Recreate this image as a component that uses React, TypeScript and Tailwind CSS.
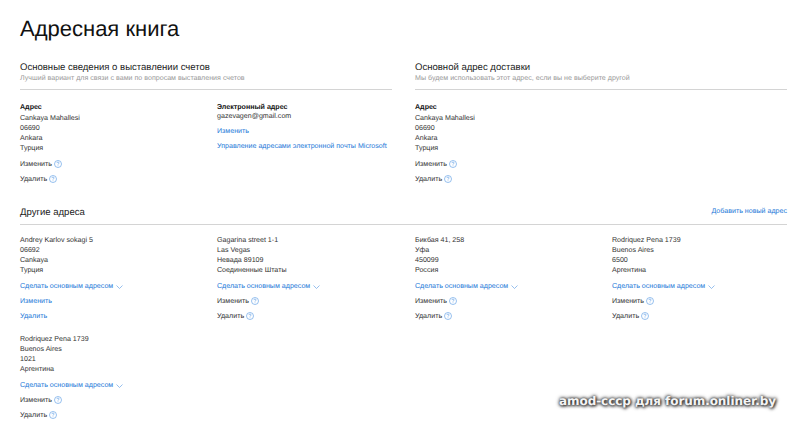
import React from "react";

const Help = () => (
  <svg width="8" height="8" viewBox="0 0 8 8" fill="none" className="ml-[2px] inline-block relative -top-[1px]">
    <circle cx="4" cy="4" r="3.5" stroke="#6aa5e6" strokeWidth="0.7" />
    <path d="M2.9 3.1C2.9 2.4 3.4 2 4 2s1.1.4 1.1 1c0 .8-1.1.8-1.1 1.6M4 5.5v.6" stroke="#6aa5e6" strokeWidth="0.7" />
  </svg>
);

const Chevron = () => (
  <svg width="7" height="4" viewBox="0 0 7 4" fill="none" className="ml-[3px] inline-block">
    <path d="M.5.5 3.5 3.5 6.5.5" stroke="#6aa5e6" strokeWidth="0.7" />
  </svg>
);

const Lines = ({ lines }: { lines: string[] }) => (
  <div className="leading-[10px] text-[#333]">
    {lines.map((l) => (
      <div key={l}>{l}</div>
    ))}
  </div>
);

const Action = ({ label, blue, help }: { label: string; blue?: boolean; help?: boolean }) => (
  <div className={`h-[15px] leading-[15px] flex items-center ${blue ? "text-[#2478d8]" : "text-[#333]"}`}>
    <span>{label}</span>
    {help && <Help />}
  </div>
);

const OtherAddress = ({ lines, enabled }: { lines: string[]; enabled?: boolean }) => (
  <div className="h-[99px]">
    <Lines lines={lines} />
    <div className="mt-[4px] h-[15px] leading-[15px] flex items-center text-[#2478d8]">
      <span>Сделать основным адресом</span>
      <Chevron />
    </div>
    <Action label="Изменить" blue={enabled} help={!enabled} />
    <Action label="Удалить" blue={enabled} help={!enabled} />
  </div>
);

const SectionHead = ({ title, sub }: { title: string; sub: string }) => (
  <div className="h-[29px] border-b border-[#d4d4d4] box-content">
    <div className="text-[9.55px] leading-[12px] text-[#222] pt-[2px] box-content">{title}</div>
    <div className="text-[7.1px] leading-[9px] text-[#999]">{sub}</div>
  </div>
);

const Address = () => (
  <div>
    <div className="font-bold text-[#111] leading-[12px]">Адрес</div>
    <Lines lines={["Cankaya Mahallesi", "06690", "Ankara", "Турция"]} />
    <div className="mt-[4px]">
      <Action label="Изменить" help />
      <Action label="Удалить" help />
    </div>
  </div>
);

export default function App() {
  return (
    <div
      className="relative w-[800px] h-[424px] overflow-hidden bg-white pl-[20px] pr-[13px] text-[7.1px] [text-rendering:geometricPrecision]"
      style={{ fontFamily: '"Liberation Sans", sans-serif' }}
    >
      <h1 className="pt-[13px] text-[22px] leading-[32px] text-[#111] h-[60px]">Адресная книга</h1>
      <div className="grid grid-cols-2 gap-x-[23px]">
        <div>
          <SectionHead title="Основные сведения о выставлении счетов" sub="Лучший вариант для связи с вами по вопросам выставления счетов" />
          <div className="mt-[11px] grid grid-cols-[197px_1fr]">
            <Address />
            <div>
              <div className="font-bold text-[#111] leading-[12px]">Электронный адрес</div>
              <div className="-mt-[2px] leading-[10px] text-[#333]">gazevagen@gmail.com</div>
              <div className="mt-[3px] text-[#2478d8]">
                <div className="h-[15px] leading-[15px]">Изменить</div>
                <div className="h-[15px] leading-[15px] whitespace-nowrap">Управление адресами электронной почты Microsoft</div>
              </div>
            </div>
          </div>
        </div>
        <div>
          <SectionHead title="Основной адрес доставки" sub="Мы будем использовать этот адрес, если вы не выберите другой" />
          <div className="mt-[11px]">
            <Address />
          </div>
        </div>
      </div>
      <div className="mt-[19px] flex justify-between h-[18px] border-b border-[#d4d4d4] box-content">
        <div className="text-[9.55px] leading-[12px] text-[#222] pt-[1px] box-content">Другие адреса</div>
        <div className="text-[#2478d8] leading-[10px]">Добавить новый адрес</div>
      </div>
      <div className="mt-[10px] grid grid-cols-[197px_198px_197px_1fr]">
        <OtherAddress lines={["Andrey Karlov sokagi 5", "06692", "Cankaya", "Турция"]} enabled />
        <OtherAddress lines={["Gagarina street 1-1", "Las Vegas", "Невада 89109", "Соединенные Штаты"]} />
        <OtherAddress lines={["Бикбая 41, 258", "Уфа", "450099", "Россия"]} />
        <OtherAddress lines={["Rodriquez Pena 1739", "Buenos Aires", "6500", "Аргентина"]} />
        <OtherAddress lines={["Rodriquez Pena 1739", "Buenos Aires", "1021", "Аргентина"]} />
      </div>
      <div
        className="absolute left-[559px] top-[393px] text-[12px] leading-[16px] font-bold text-[#f4f4f4] whitespace-nowrap tracking-[-0.06px]"
        style={{ fontFamily: '"DejaVu Sans", sans-serif', textShadow: "0 0 3px #333, 0 0 4px #333, 1px 1px 3px #333" }}
      >
        amod-cccp для forum.onliner.by
      </div>
    </div>
  );
}
